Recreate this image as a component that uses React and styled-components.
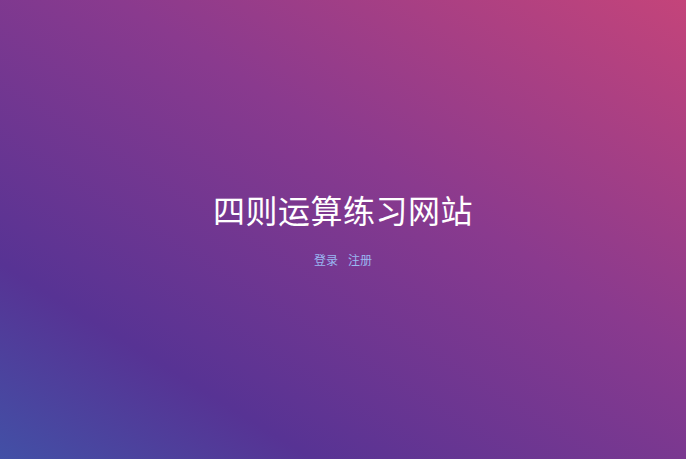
import React from 'react'
import styled, { createGlobalStyle } from 'styled-components'

const GlobalStyle = createGlobalStyle`
  html, body, #root {
    margin:0;
    padding:0;
    height:100%;
  }
  body {
    font-family:"Noto Sans CJK SC", "Noto Sans", sans-serif;
  }
`

const Container = styled.div`
  width:100%;
  height:100vh;
  display:flex;
  flex-direction:column;
  align-items:center;
  justify-content:center;
  background:linear-gradient(32deg, #4250a6 0%, #573394 22%, #8a3a8e 60%, #c4447a 100%);
`

const Title = styled.h1`
  margin:0;
  font-size:32px;
  line-height:34px;
  font-weight:400;
  color:#fff;
  letter-spacing:0.5px;
`

const Links = styled.div`
  display:flex;
  gap:10px;
  margin-top:26px;
`

const Linke = styled.a`
  font-size:12px;
  line-height:16px;
  color:#9ab8f2;
  text-decoration:none;
  cursor:pointer;
`

export default function App() {
  return (
    <>
      <GlobalStyle />
      <Container>
        <Title>四则运算练习网站</Title>
        <Links>
          <Linke href='#'>登录</Linke>
          <Linke href='#'>注册</Linke>
        </Links>
      </Container>
    </>
  )
}
